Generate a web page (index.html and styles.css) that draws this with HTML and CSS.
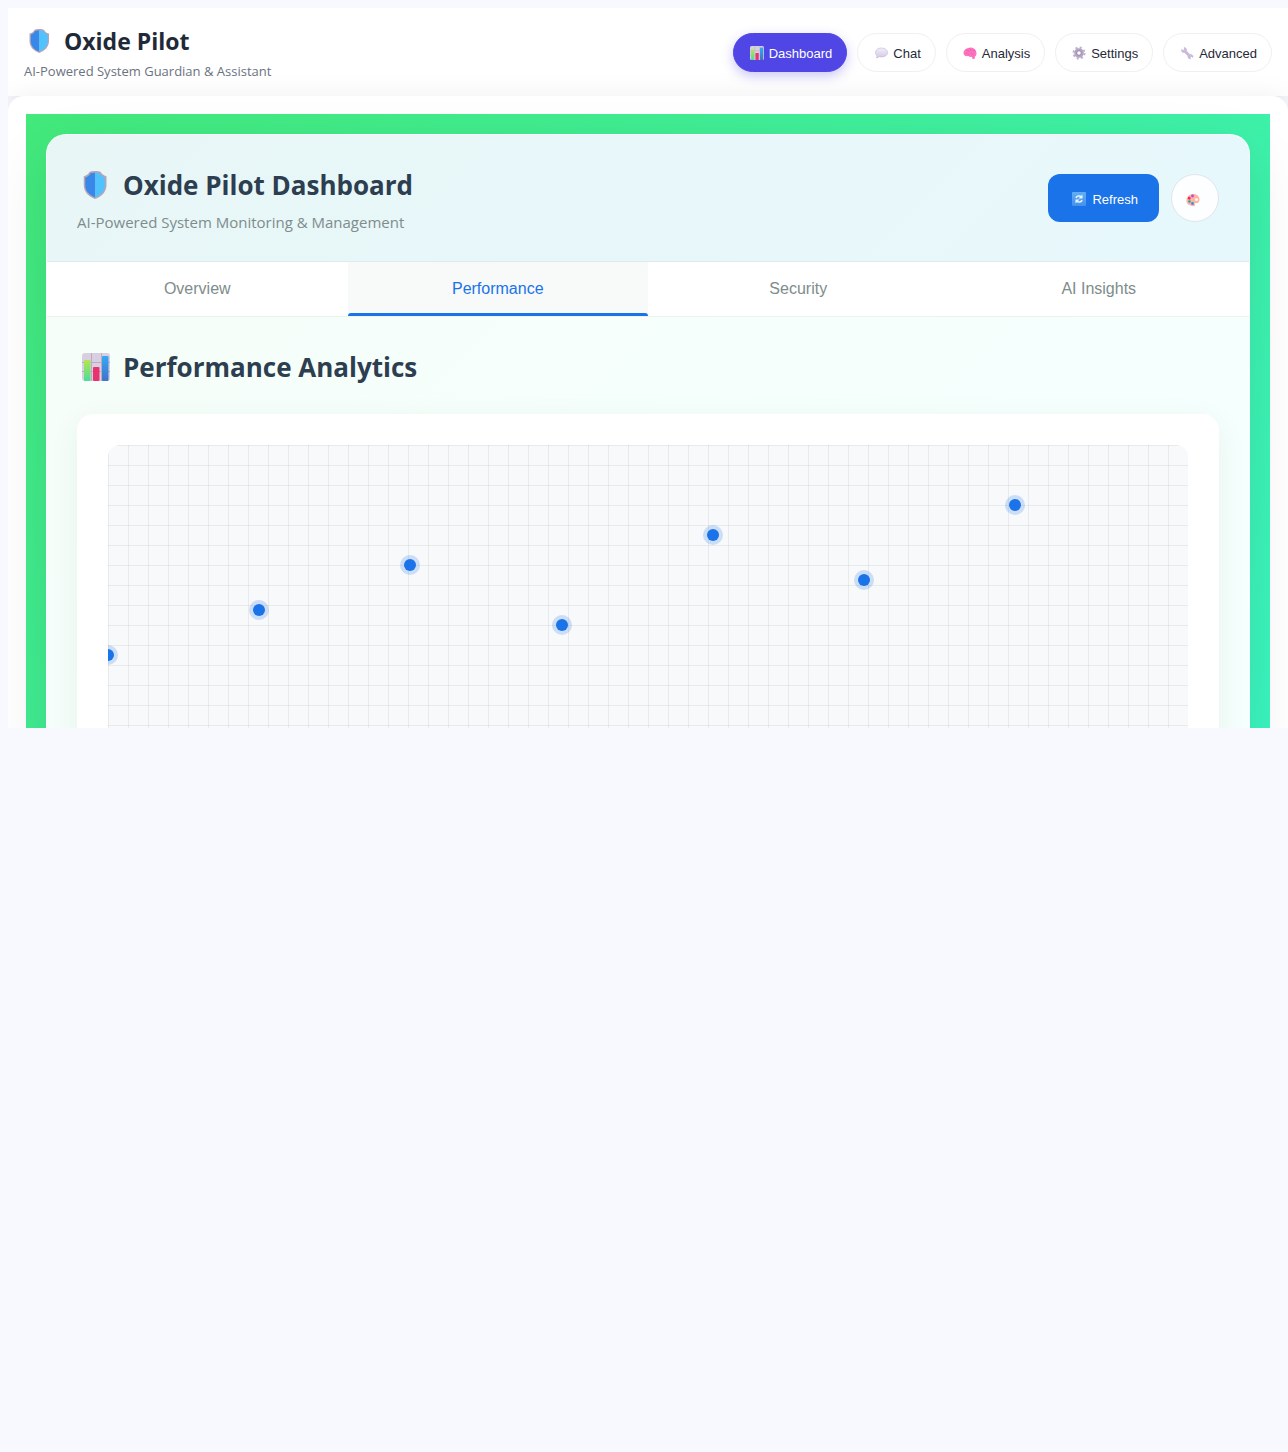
FILE: index.html
```html
<!DOCTYPE html>
<html lang="en">
<head>
<meta charset="utf-8">
<meta name="viewport" content="width=device-width, initial-scale=1">
<title>Oxide Pilot</title>
<link rel="stylesheet" href="styles.css">
</head>
<body>
<svg class="sprite" aria-hidden="true">
  <defs>
    <linearGradient id="g-green" x1="0" y1="0" x2="0" y2="1"><stop offset="0" stop-color="#b5e64c"/><stop offset="1" stop-color="#4bdc9a"/></linearGradient>
    <linearGradient id="g-blue" x1="0" y1="0" x2="0" y2="1"><stop offset="0" stop-color="#35a9f5"/><stop offset="1" stop-color="#4272c8"/></linearGradient>
    <linearGradient id="g-bubble" x1="0" y1="0" x2="0" y2="1"><stop offset="0" stop-color="#f3eff9"/><stop offset="1" stop-color="#d3c7e4"/></linearGradient>
    <linearGradient id="g-refresh" x1="0" y1="0" x2="0" y2="1"><stop offset="0" stop-color="#62aef5"/><stop offset="1" stop-color="#4590eb"/></linearGradient>
    <symbol id="shield" viewBox="0 0 32 32">
      <path fill="#b7a5b7" d="M15 0c3 0 5 .3 6.500 1.200C22.800 3.700 24.500 5 28 6v10c0 8-5.500 13-13 16C7.500 29 2 24 2 16V6c3.500-1 5.200-2.300 6.500-4.800C10 .3 12 0 15 0z"/>
      <path fill="#3888e9" d="M15 2c-2.500 0-4.200.2-5.500.8C8.300 5.200 6.500 6.600 3.700 7.500V16c0 6.800 4.500 11.500 11.300 14.300z"/>
      <path fill="#50c3ff" d="M15 2c2.500 0 4.200.2 5.500.8 1.200 2.400 3 3.800 5.800 4.700V16c0 6.800-4.500 11.500-11.300 14.300z"/>
    </symbol>
    <symbol id="chart" viewBox="0 0 28 28">
      <rect width="28" height="28" rx="3" fill="#d8cfe0"/>
      <path d="M9.500 0v28M19.500 0v28M0 9.500h28M0 18.500h28" stroke="#b9adc4"/>
      <rect x="2" y="7" width="6.500" height="21" rx="1" fill="url(#g-green)"/>
      <rect x="11" y="14" width="6.500" height="14" rx="1" fill="#e93370"/>
      <rect x="20" y="3" width="6.500" height="25" rx="1" fill="url(#g-blue)"/>
    </symbol>
    <symbol id="bubble" viewBox="0 0 28 28">
      <path fill="url(#g-bubble)" stroke="#c3b6d2" stroke-width="1.200" d="M15 4c7 0 12 3.600 12 9s-5 9-12 9c-1.500 0-3-.2-4.300-.6L5 24l1.200-4.400C4.200 18 3 15.700 3 13c0-5.400 5-9 12-9z"/>
    </symbol>
    <symbol id="brain" viewBox="0 0 28 28">
      <path fill="#ff72bd" d="M10 4c6-3 14 0 16 6 2 5 1 10-2 11l-1 5h-4l-1-4c-4 0-6-1-8-2-5 1-9-1-9-6C1 9 5 5 10 4z"/>
      <path fill="none" stroke="#e458aa" stroke-width="1.200" d="M6 9c3-2 6 0 6 3M13 5c3 1 3 4 1 6M18 9c3-2 6 0 6 3M5 15c3-2 6 0 7 3M15 15c3-2 5 0 6 4"/>
    </symbol>
    <symbol id="gear" viewBox="0 0 28 28">
      <circle cx="14" cy="14" r="11" fill="none" stroke="#c0b3cf" stroke-width="4" stroke-dasharray="4.300 4.340"/>
      <circle cx="14" cy="14" r="6.800" fill="none" stroke="#b4a5c4" stroke-width="5.500"/>
      <circle cx="14" cy="14" r="4.600" fill="none" stroke="#8f81a5" stroke-width="1.500"/>
    </symbol>
    <symbol id="wrench" viewBox="0 0 28 28">
      <path fill="#ccbade" stroke="#b7a4cb" stroke-width=".8" d="M8 3c4 0 6 3 5 7l7 7c4-1 7 2 6 6l-3-2-3 2 1 3c-4 0-6-3-5-6l-7-7c-4 1-7-2-6-6l3 2 3-2z"/>
    </symbol>
    <symbol id="refresh" viewBox="0 0 28 28">
      <rect width="28" height="28" rx="2" fill="url(#g-refresh)"/>
      <path d="M8 12c1-4 7-6 11-2M20 16c-1 4-7 6-11 2" fill="none" stroke="#e6f4ff" stroke-width="3"/>
      <path d="M21 5v8h-8zM7 23v-8h8z" fill="#e6f4ff"/>
    </symbol>
    <symbol id="palette" viewBox="0 0 28 28">
      <path fill="#ffb3a1" d="M13 2c8-1 14 4 14 11 0 6-4 8-8 7-2 0-2 1-1 3 1 3-2 4-5 3C5 25 0 20 1 13 2 7 6 3 13 2z"/>
      <circle cx="21" cy="13" r="3" fill="#fff5f2"/>
      <circle cx="13" cy="6" r="2.800" fill="#b44be0"/>
      <circle cx="6.500" cy="10.500" r="2.800" fill="#e62e6d"/>
      <circle cx="7" cy="17" r="2.600" fill="#31a39a"/>
      <circle cx="13" cy="21" r="2.800" fill="#3b8fe8"/>
    </symbol>
  </defs>
</svg>
<div class="app">
  <header class="topbar">
    <div class="brand">
      <h1 class="brand-name"><svg class="emoji-md" aria-hidden="true"><use href="#shield"/></svg>Oxide Pilot</h1>
      <p class="brand-tagline">AI-Powered System Guardian &amp; Assistant</p>
    </div>
    <nav class="nav" aria-label="Main">
      <button class="nav-button nav-button-active" type="button"><svg class="emoji-sm" aria-hidden="true"><use href="#chart"/></svg>Dashboard</button>
      <button class="nav-button" type="button"><svg class="emoji-sm" aria-hidden="true"><use href="#bubble"/></svg>Chat</button>
      <button class="nav-button" type="button"><svg class="emoji-sm" aria-hidden="true"><use href="#brain"/></svg>Analysis</button>
      <button class="nav-button" type="button"><svg class="emoji-sm" aria-hidden="true"><use href="#gear"/></svg>Settings</button>
      <button class="nav-button" type="button"><svg class="emoji-sm" aria-hidden="true"><use href="#wrench"/></svg>Advanced</button>
    </nav>
  </header>
  <main class="main">
    <div class="backdrop">
      <div class="dashboard">
        <header class="dashboard-header">
          <div>
            <h2 class="title"><svg class="emoji-lg" aria-hidden="true"><use href="#shield"/></svg>Oxide Pilot Dashboard</h2>
            <p class="subtitle">AI-Powered System Monitoring &amp; Management</p>
          </div>
          <div class="actions">
            <button class="refresh" type="button"><svg class="emoji-sm" aria-hidden="true"><use href="#refresh"/></svg>Refresh</button>
            <button class="theme" type="button" aria-label="Theme"><svg class="emoji-sm" aria-hidden="true"><use href="#palette"/></svg></button>
          </div>
        </header>
        <div class="tabs" role="tablist">
          <button class="tab" type="button" role="tab" aria-selected="false">Overview</button>
          <button class="tab tab-active" type="button" role="tab" aria-selected="true">Performance</button>
          <button class="tab" type="button" role="tab" aria-selected="false">Security</button>
          <button class="tab" type="button" role="tab" aria-selected="false">AI Insights</button>
        </div>
        <section class="content">
          <h2 class="title"><svg class="emoji-lg" aria-hidden="true"><use href="#chart"/></svg>Performance Analytics</h2>
          <div class="panel">
            <div class="plot">
              <span class="point" style="left: 0%; bottom: 30%"></span>
              <span class="point" style="left: 14%; bottom: 45%"></span>
              <span class="point" style="left: 28%; bottom: 60%"></span>
              <span class="point" style="left: 42%; bottom: 40%"></span>
              <span class="point" style="left: 56%; bottom: 70%"></span>
              <span class="point" style="left: 70%; bottom: 55%"></span>
              <span class="point" style="left: 84%; bottom: 80%"></span>
            </div>
          </div>
        </section>
      </div>
    </div>
  </main>
</div>
</body>
</html>
```
FILE: styles.css
```css
* {
  box-sizing: border-box;
}

body {
  margin: 8px 0 0 8px;
  background: #f8f9fe;
  color: #1f2937;
  font-family: "Open Sans", "Noto Sans", sans-serif;
}

h1, h2, p {
  margin: 0;
}

button {
  padding: 0;
  border: 0;
  font-family: "Liberation Sans", Arial, sans-serif;
  cursor: pointer;
}

.sprite {
  position: absolute;
  width: 0;
  height: 0;
}

.emoji-sm { width: 14px; height: 14px; }
.emoji-md { width: 24px; height: 24px; margin: 0 4px; }
.emoji-lg { width: 28px; height: 28px; margin: 0 5px; }

.app {
  max-height: 720px;
  overflow: hidden;
}

.topbar {
  display: flex;
  align-items: center;
  justify-content: space-between;
  padding: 16px;
  background: #fff;
  box-shadow: 0 2px 16px rgba(0, 0, 0, 0.06);
}

.brand-name {
  display: flex;
  align-items: center;
  gap: 8px;
  font-size: 23px;
  line-height: 34px;
}

.brand-tagline {
  margin-top: 4px;
  color: #6b7280;
  font-size: 13px;
  line-height: 18px;
}

.nav {
  display: flex;
  gap: 10px;
}

.nav-button {
  display: flex;
  align-items: center;
  gap: 5px;
  height: 39px;
  padding: 2px 14px 0 16px;
  border: 1px solid #f0f0f2;
  border-radius: 20px;
  background: #fff;
  color: #1f2937;
  font-size: 13px;
}

.nav-button-active {
  border-color: #4f46e5;
  background: #4f46e5;
  color: #fff;
  box-shadow: 0 4px 12px rgba(79, 70, 229, 0.3);
}

.main {
  padding: 18px;
  border-radius: 16px;
  background: #fff;
  box-shadow: 0 4px 32px rgba(0, 0, 0, 0.08);
}

.backdrop {
  padding: 20px;
  background: linear-gradient(135deg, #43e97b 0, #38f9d7 1760px);
}

.dashboard {
  border: 1px solid rgba(255, 255, 255, 0.6);
  border-radius: 20px;
  overflow: hidden;
  background: linear-gradient(135deg, #f5fef8 0, #f5fffd 1000px);
  box-shadow: 0 20px 60px rgba(0, 0, 0, 0.1);
}

.dashboard-header {
  display: flex;
  align-items: center;
  justify-content: space-between;
  padding: 30px;
  border-bottom: 1px solid #dcebed;
  background: linear-gradient(135deg, #e8f6f6, #e7f8fc);
}

.title {
  display: flex;
  align-items: center;
  gap: 8px;
  color: #2c3e50;
  font-size: 26px;
  line-height: 40px;
}

.subtitle {
  margin-top: 8px;
  color: #7f8c8d;
  font-size: 15px;
  line-height: 18px;
}

.actions {
  display: flex;
  gap: 12px;
}

.refresh {
  display: flex;
  align-items: center;
  gap: 6px;
  height: 48px;
  padding: 2px 21px 0 24px;
  border-radius: 12px;
  background: #1a73e8;
  color: #fff;
  font-size: 13px;
}

.theme {
  display: flex;
  align-items: center;
  justify-content: center;
  width: 48px;
  height: 48px;
  padding: 4px 5px 0 0;
  border: 1px solid #e0e6ea;
  border-radius: 50%;
  background: #fcfeff;
}

.tabs {
  display: grid;
  grid-template-columns: repeat(4, 1fr);
  border-bottom: 1px solid #ecf2ef;
  background: #fefffe;
}

.tab {
  position: relative;
  height: 54px;
  background: transparent;
  color: #7f8c8d;
  font-size: 16px;
}

.tab-active {
  background: #f8faf9;
  color: #1a73e8;
}

.tab-active::after {
  content: "";
  position: absolute;
  inset: auto 0 0;
  height: 3px;
  border-radius: 3px 3px 0 0;
  background: #1a73e8;
}

.content {
  display: flex;
  flex-direction: column;
  gap: 27px;
  padding: 30px;
}

.panel {
  padding: 31px;
  border-radius: 16px;
  background: #fff;
  box-shadow: 0 8px 32px rgba(0, 60, 30, 0.06);
}

.plot {
  position: relative;
  height: 300px;
  border-radius: 12px;
  overflow: hidden;
  background:
    linear-gradient(rgba(0, 0, 0, 0.06) 1px, transparent 1px) 0 0 / 20px 20px,
    linear-gradient(90deg, rgba(0, 0, 0, 0.06) 1px, transparent 1px) 0 0 / 20px 20px,
    #f8f9fb;
}

.point {
  position: absolute;
  width: 12px;
  height: 12px;
  border-radius: 50%;
  background: #1a73e8;
  box-shadow: 0 0 0 4px rgba(26, 115, 232, 0.2);
  transform: translate(-50%, 50%);
}
```
